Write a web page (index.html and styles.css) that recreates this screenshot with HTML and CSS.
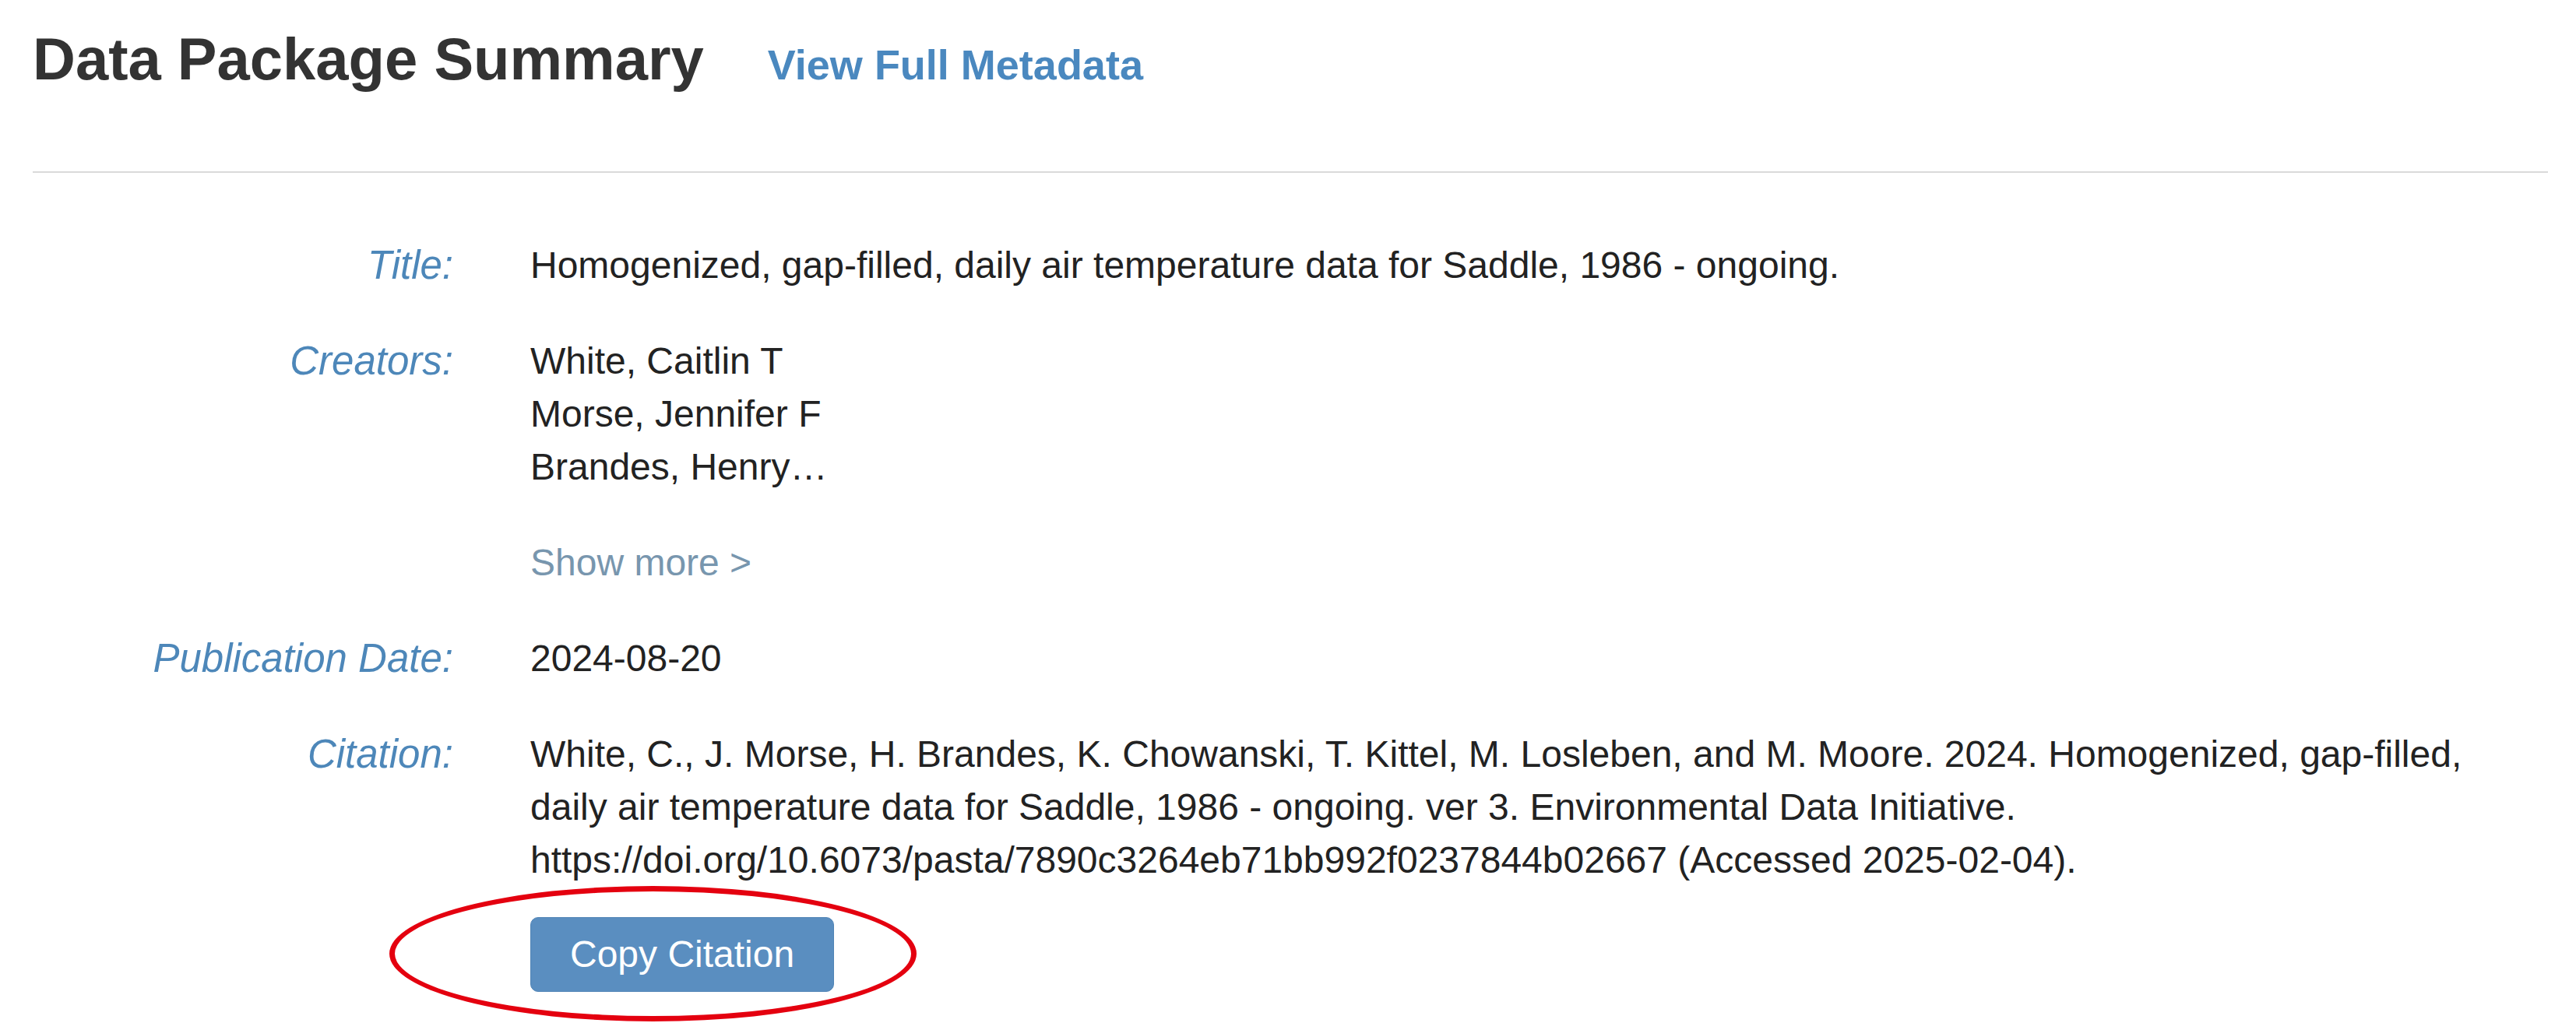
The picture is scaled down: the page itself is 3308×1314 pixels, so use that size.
FILE: index.html
```html
<!DOCTYPE html>
<html lang="en">
<head>
<meta charset="utf-8">
<title>Data Package Summary</title>
<link rel="stylesheet" href="styles.css">
</head>
<body>
<div class="page">
  <header class="summary-head">
    <h1 class="summary-title">Data Package Summary</h1>
    <a class="meta-link" href="#">View Full Metadata</a>
  </header>
  <hr class="divider">
  <dl class="summary">
    <dt>Title:</dt>
    <dd>Homogenized, gap-filled, daily air temperature data for Saddle, 1986 - ongoing.</dd>

    <dt>Creators:</dt>
    <dd>
      <div>White, Caitlin T</div>
      <div>Morse, Jennifer F</div>
      <div>Brandes, Henry…</div>
    </dd>

    <dt class="empty"></dt>
    <dd><a class="show-more" href="#">Show more &gt;</a></dd>

    <dt>Publication Date:</dt>
    <dd>2024-08-20</dd>

    <dt>Citation:</dt>
    <dd>
      <p class="cite-text">White, C., J. Morse, H. Brandes, K. Chowanski, T. Kittel, M. Losleben, and M. Moore. 2024. Homogenized, gap-filled, daily air temperature data for Saddle, 1986 - ongoing. ver 3. Environmental Data Initiative. https://doi.org/10.6073/pasta/7890c3264eb71bb992f0237844b02667 (Accessed 2025-02-04).</p>
      <div class="copy-wrap">
        <button class="copy-btn" type="button">Copy Citation</button>
        <span class="annot" aria-hidden="true"></span>
      </div>
    </dd>
  </dl>
</div>
</body>
</html>
```

FILE: styles.css
```css
html, body {
  margin: 0;
  padding: 0;
  background: #ffffff;
}

body {
  font-family: "Liberation Sans", Arial, Helvetica, sans-serif;
  color: #222222;
  font-size: 48px;
  line-height: 68px;
}

.page {
  padding: 0 36px 42px 42px;
}

.summary-head {
  display: flex;
  align-items: baseline;
  gap: 82px;
  padding-top: 34px;
}

.summary-title {
  margin: 0;
  font-size: 76px;
  line-height: 84px;
  font-weight: bold;
  color: #333333;
}

.meta-link {
  font-size: 54px;
  line-height: 60px;
  font-weight: bold;
  color: #4a88bf;
  text-decoration: none;
}

.divider {
  margin: 102px 0 0;
  border: 0;
  height: 2px;
  background: #dadada;
}

.summary {
  display: grid;
  grid-template-columns: 540px 1fr;
  column-gap: 99px;
  row-gap: 55px;
  margin: 85px 0 0;
}

.summary dt {
  margin: 0;
  text-align: right;
  font-style: italic;
  font-size: 51px;
  color: #4d87b9;
}

.summary dd {
  margin: 0;
}

.show-more {
  color: #7896ae;
  text-decoration: none;
}

.cite-text {
  margin: 0;
}

.copy-wrap {
  position: relative;
  width: max-content;
  margin-top: 39px;
}

.copy-btn {
  display: block;
  margin: 0;
  font-family: inherit;
  font-size: 48px;
  line-height: 68px;
  color: #ffffff;
  background: #5a8ec0;
  border: 1px solid #5084b6;
  border-radius: 10px;
  padding: 13px 50px;
}

.annot {
  position: absolute;
  left: -181px;
  top: -40px;
  width: 677px;
  height: 174px;
  box-sizing: border-box;
  border: 7px solid #e4000f;
  border-radius: 50%;
  pointer-events: none;
}
```
